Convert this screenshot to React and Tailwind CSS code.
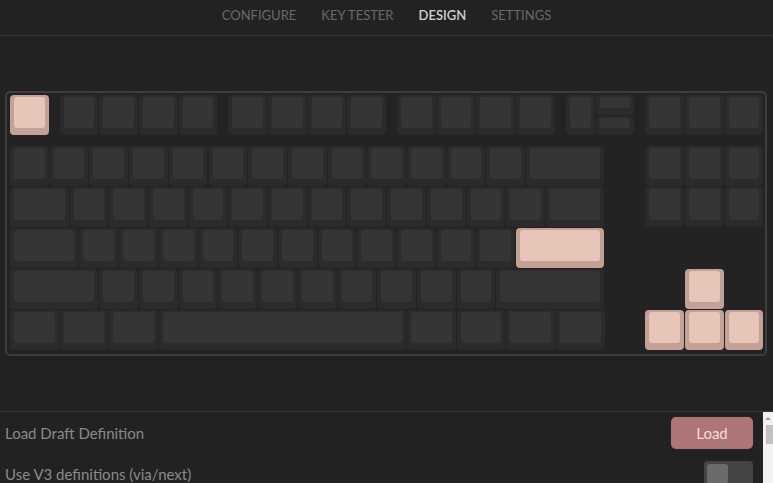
import React from 'react';

// key unit sizes in px (horizontal / vertical pitch)
const U = 39.7;
const V = 41;

// KLE-style layout: x / y in units, w / h default to 1
const row = (y, list) => list.map((k) => ({ y, w: 1, h: 1, ...k }));
const ones = (from, count) => Array.from({ length: count }, (_, i) => ({ x: from + i }));

const LAYOUT = [
  ...row(0, [
    { x: 0, pink: true },
    ...ones(1.25, 4),
    ...ones(5.5, 4),
    ...ones(9.75, 4),
    { x: 14, w: 0.75 },
    { x: 14.75, h: 0.5 },
    { x: 14.75, y: 0.5, h: 0.5 },
    ...ones(16, 3),
  ]),
  ...row(1.25, [...ones(0, 13), { x: 13, w: 2 }, ...ones(16, 3)]),
  ...row(2.25, [{ x: 0, w: 1.5 }, ...ones(1.5, 12), { x: 13.5, w: 1.5 }, ...ones(16, 3)]),
  ...row(3.25, [{ x: 0, w: 1.75 }, ...ones(1.75, 11), { x: 12.75, w: 2.25, pink: true }]),
  ...row(4.25, [{ x: 0, w: 2.25 }, ...ones(2.25, 10), { x: 12.25, w: 2.75 }, { x: 17, pink: true }]),
  ...row(5.25, [
    { x: 0, w: 1.25 },
    { x: 1.25, w: 1.25 },
    { x: 2.5, w: 1.25 },
    { x: 3.75, w: 6.25 },
    { x: 10, w: 1.25 },
    { x: 11.25, w: 1.25 },
    { x: 12.5, w: 1.25 },
    { x: 13.75, w: 1.25 },
    { x: 16, pink: true },
    { x: 17, pink: true },
    { x: 18, pink: true },
  ]),
];

const Key = ({ k }) => (
  <div
    className={`absolute rounded-[4px] ${k.pink ? 'bg-[#c4a196]' : 'bg-[#2b2b2b]'}`}
    style={{
      left: 3 + k.x * U,
      top: 2 + k.y * V,
      width: k.w * U - 1,
      height: k.h * V - 1,
    }}
  >
    <div
      className={`absolute left-1 right-1 top-0.5 bottom-[7px] rounded-[3px] ${
        k.pink ? 'bg-[#e7c5b9]' : 'bg-[#353535]'
      }`}
    />
  </div>
);

const tabs = ['Configure', 'Key Tester', 'Design', 'Settings'];

const App = () => {
  return (
    <div className="w-[773px] h-[483px] overflow-hidden bg-[#222222] font-['Lato',sans-serif] flex flex-col">
      <nav className="h-[36px] shrink-0 border-b border-[#3a3a3a] flex items-center justify-center gap-[25px] pb-[4px]">
        {tabs.map((t) => (
          <span
            key={t}
            className={`uppercase text-[13px] ${t === 'Design' ? 'text-[#cfcfcf] font-semibold' : 'text-[#6a6a6a]'}`}
          >
            {t}
          </span>
        ))}
      </nav>

      <div className="h-[375px] shrink-0 flex items-center px-[5px]">
        <div className="relative w-[762px] h-[265px] rounded-[5px] border-2 border-[#3d3d3d] bg-[#232323]">
          {LAYOUT.map((k, i) => (
            <Key key={i} k={k} />
          ))}
        </div>
      </div>

      <div className="flex-1 flex border-t border-[#3a3a3a]">
        <div className="flex-1 flex flex-col pl-[5px] pr-[10px]">
          <div className="h-[42px] shrink-0 flex items-center justify-between">
            <span className="text-[15px] text-[#8a8a8a]">Load Draft Definition</span>
            <button className="w-[82px] h-[32px] rounded-[5px] bg-[#ad7575] text-[15px] text-[#f2dede]">
              Load
            </button>
          </div>
          <div className="h-[40px] shrink-0 flex items-center justify-between">
            <span className="text-[15px] text-[#8a8a8a]">Use V3 definitions (via/next)</span>
            <div className="w-[49px] h-[26px] rounded-[4px] bg-[#444444] p-[3px]">
              <div className="w-[21px] h-[20px] rounded-[3px] bg-[#6b6b6b]" />
            </div>
          </div>
        </div>
        {/* scrollbar */}
        <div className="w-[10px] bg-[#f1f1f1] flex flex-col items-center">
          <div className="mt-[5px] w-0 h-0 border-l-[3px] border-r-[3px] border-b-[3px] border-l-transparent border-r-transparent border-b-[#a3a3a3]" />
          <div className="mt-[5px] ml-[3px] w-[7px] h-[19px] bg-[#c1c1c1]" />
        </div>
      </div>
    </div>
  );
};

export default App;
